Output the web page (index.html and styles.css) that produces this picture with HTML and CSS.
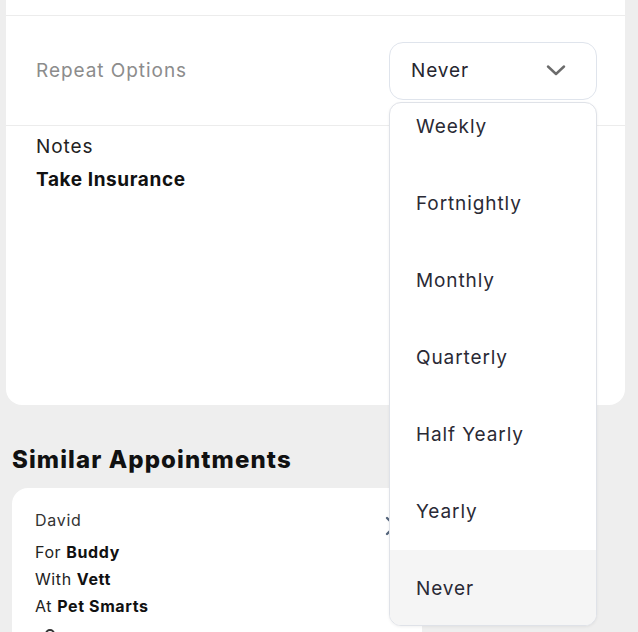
FILE: index.html
```html
<!DOCTYPE html>
<html lang="en">
<head>
<meta charset="utf-8">
<title>Appointment</title>
<link rel="stylesheet" href="styles.css">
</head>
<body>
<div class="page">
  <section class="detail-card">
    <div class="top-row"></div>
    <div class="repeat-row">
      <span class="repeat-label">Repeat Options</span>
      <div class="select">
        <span class="select-value">Never</span>
        <svg class="chev" width="20" height="11" viewBox="0 0 20 11"><path d="M2 1.5 L10 9 L18 1.5" fill="none" stroke="#6b6b6b" stroke-width="2.4" stroke-linecap="round" stroke-linejoin="round"/></svg>
      </div>
    </div>
    <div class="notes">
      <div class="notes-label">Notes</div>
      <div class="notes-value">Take Insurance</div>
    </div>
  </section>

  <h2 class="section-title">Similar Appointments</h2>

  <div class="appt-card">
    <div class="appt-head">
      <div class="appt-name">David</div>
      <svg class="appt-chev" width="12" height="20" viewBox="0 0 12 20"><path d="M2 2 L10 10 L2 18" fill="none" stroke="#55657c" stroke-width="2.4" stroke-linecap="round" stroke-linejoin="round"/></svg>
    </div>
    <div class="appt-line">For <b>Buddy</b></div>
    <div class="appt-line">With <b>Vett</b></div>
    <div class="appt-line">At <b>Pet Smarts</b></div>
    <div class="appt-icon-row"><span class="appt-icon"></span></div>
  </div>

  <div class="dropdown">
    <ul class="options">
      <li class="option">Weekly</li>
      <li class="option">Fortnightly</li>
      <li class="option">Monthly</li>
      <li class="option">Quarterly</li>
      <li class="option">Half Yearly</li>
      <li class="option">Yearly</li>
      <li class="option selected">Never</li>
    </ul>
  </div>
</div>
</body>
</html>
```
FILE: styles.css
```css
* { box-sizing: border-box; }
html, body { margin: 0; padding: 0; }
body {
  background: #eeeeee;
  font-family: Inter, "Noto Sans", sans-serif;
  color: #222;
  width: 638px;
  height: 632px;
  overflow: hidden;
}
.page {
  position: relative;
  height: 632px;
  overflow: hidden;
}
.detail-card {
  margin-left: 6px;
  width: 619px;
  height: 405px;
  background: #fff;
  border-radius: 0 0 16px 16px;
  display: flex;
  flex-direction: column;
}
.top-row {
  height: 16px;
  border-bottom: 1px solid #ececec;
}
.repeat-row {
  height: 110px;
  border-bottom: 1px solid #ececec;
  display: flex;
  align-items: center;
  justify-content: space-between;
  padding: 0 28px 0 30px;
}
.repeat-label {
  font-size: 19px;
  letter-spacing: 0.95px;
  color: #8c8c8c;
}
.select {
  width: 208px;
  height: 58px;
  border: 1px solid #dfe4ec;
  border-radius: 14px;
  display: flex;
  align-items: center;
  justify-content: space-between;
  padding: 0 30px 0 21px;
}
.select-value {
  font-size: 19px;
  letter-spacing: 0.9px;
  color: #26262f;
}
.chev { display: block; }
.notes {
  padding: 8px 30px;
}
.notes-label {
  font-size: 19px;
  letter-spacing: 0.9px;
  line-height: 26px;
  color: #222;
}
.notes-value {
  font-size: 19px;
  letter-spacing: 0.6px;
  line-height: 26px;
  margin-top: 7px;
  font-weight: 700;
  color: #111;
}
.section-title {
  margin: 40px 0 0 12px;
  font-size: 24px;
  letter-spacing: 1.1px;
  line-height: 30px;
  font-weight: 800;
  color: #111;
}
.appt-card {
  margin: 13px 0 0 12px;
  width: 410px;
  height: 200px;
  background: #fff;
  border-radius: 16px;
  padding: 22px 0 0 23px;
}
.appt-head {
  display: flex;
  justify-content: space-between;
  align-items: center;
  padding-right: 25px;
  height: 20px;
}
.appt-name {
  font-size: 16px;
  letter-spacing: 0.7px;
  color: #333;
}
.appt-chev { display: block; margin-top: 12px; }
.appt-line {
  font-size: 16px;
  letter-spacing: 0.6px;
  line-height: 27px;
  color: #222;
}
.appt-head + .appt-line { margin-top: 9px; }
.appt-line b { font-weight: 700; color: #111; }
.appt-icon-row { margin-top: 9px; padding-left: 10px; }
.appt-icon {
  display: block;
  width: 10px;
  height: 10px;
  border: 2px solid #333;
  border-radius: 50%;
}
.dropdown {
  position: absolute;
  left: 389px;
  top: 102px;
  width: 208px;
  height: 524px;
  background: #fff;
  border: 1px solid #dfe2e8;
  border-radius: 12px;
  box-shadow: 0 1px 3px rgba(0,0,0,0.06);
  overflow: hidden;
}
.options {
  list-style: none;
  margin: -15px 0 0 0;
  padding: 0;
}
.option {
  height: 77px;
  display: flex;
  align-items: center;
  padding-left: 26px;
  font-size: 19px;
  letter-spacing: 0.9px;
  color: #2a2a35;
}
.option.selected { background: #f5f5f5; }
```
